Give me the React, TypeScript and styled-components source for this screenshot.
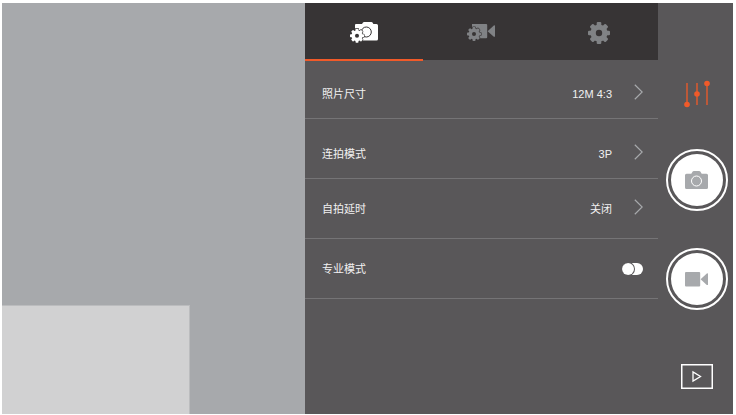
import React, { useState } from "react";
import styled, { createGlobalStyle } from "styled-components";

const colors = {
  panel: "#595759",
  header: "#373435",
  accent: "#f15a29",
  viewfinder: "#a7a9ac",
  preview: "#d1d1d2",
  previewEdge: "#bbbcbe",
  muted: "#808285",
  glyph: "#a7a9ac",
  line: "#757476",
  text: "#f1f1f1",
};

const GlobalStyle = createGlobalStyle`
  *, *::before, *::after { box-sizing: border-box; }
  body {
    margin: 0;
    background: #fff;
    font-family: "Liberation Sans", "Noto Sans CJK SC", sans-serif;
    font-size: 11px;
    line-height: 16px;
    color: ${colors.text};
  }
  button {
    font: inherit;
    color: inherit;
    background: none;
    border: 0;
    padding: 0;
    cursor: pointer;
  }
  svg { display: block; }
`;

const Screen = styled.div`
  min-height: 100vh;
  padding: 3px 3px 1px 2px;
  display: grid;
  grid-template-columns: 303fr 353fr 75px;
`;

const Viewfinder = styled.section`
  background: ${colors.viewfinder};
  display: grid;
  grid-template-columns: 62% 1fr;
  grid-template-rows: 1fr 109px;
`;

const Preview = styled.div`
  grid-area: 2 / 1;
  background: ${colors.preview};
  border: solid ${colors.previewEdge};
  border-width: 1px 1px 0 0;
`;

const Settings = styled.main`
  background: ${colors.panel};
`;

const Tabs = styled.div`
  display: grid;
  grid-template-columns: repeat(3, 1fr);
  height: 57px;
  background: ${colors.header};
`;

const Tab = styled.button<{ $active: boolean }>`
  position: relative;
  display: flex;
  align-items: center;
  justify-content: center;
  padding-top: 2px;
  color: ${(p) => (p.$active ? "#fff" : colors.muted)};

  &::after {
    content: "";
    display: ${(p) => (p.$active ? "block" : "none")};
    position: absolute;
    left: 0;
    right: 0;
    bottom: -1px;
    height: 2px;
    background: ${colors.accent};
  }
`;

const Rows = styled.div`
  display: grid;
  grid-template-rows: 59px 60px 60px 60px;
`;

const Row = styled.label<{ $low?: boolean }>`
  display: flex;
  align-items: center;
  padding: ${(p) => (p.$low ? "10px" : "0")} 15px 0 17px;
  border-bottom: 1px solid ${colors.line};
  text-align: left;
  cursor: pointer;
`;

const RowLabel = styled.span`
  flex: 1;
`;

const RowValue = styled.span`
  margin-right: 22px;
`;

const Arrow = styled.svg`
  width: 9px;
  height: 20px;
  padding-bottom: 4px;
`;

const Toggle = styled.input`
  appearance: none;
  position: relative;
  margin: 0;
  width: 21px;
  height: 12px;
  border-radius: 6px;
  background: #fff;
  overflow: hidden;
  cursor: pointer;

  &::before {
    content: "";
    position: absolute;
    top: 0;
    left: 0;
    width: 12px;
    height: 12px;
    border-radius: 50%;
    background: #fff;
    box-shadow: 0 0 0 1px ${colors.panel};
  }

  &:checked::before {
    left: 9px;
    background: ${colors.accent};
  }
`;

const Rail = styled.aside`
  background: ${colors.panel};
  display: flex;
  flex-direction: column;
  align-items: center;
  justify-content: space-between;
  padding: 76px 0 12px 2px;
`;

const RailButton = styled.button<{ $tall?: boolean }>`
  display: flex;
  align-items: center;
  justify-content: center;
  width: 48px;
  height: ${(p) => (p.$tall ? "52px" : "30px")};
`;

const Shutters = styled.div`
  display: grid;
  gap: 37px;
`;

const Shutter = styled.button`
  display: flex;
  width: 62px;
  height: 62px;
  padding: 3px;
  border: 2px solid #fff;
  border-radius: 50%;
`;

const ShutterFace = styled.span`
  flex: 1;
  display: flex;
  align-items: center;
  justify-content: center;
  border-radius: 50%;
  background: #fff;
`;

type GearProps = { x: number; y: number; r: number; halo?: boolean };

function Gear({ x, y, r, halo }: GearProps) {
  const tooth = r * 0.42;
  const angles = [0, 45, 90, 135];
  const teeth = angles.map((a) => (
    <rect key={a} x={-tooth / 2} y={-r} width={tooth} height={r * 2} rx={r * 0.1} transform={`rotate(${a})`} />
  ));
  return (
    <g transform={`translate(${x} ${y})`}>
      {halo && (
        <g fill={colors.header} stroke={colors.header} strokeWidth="1.2">
          <circle r={r * 0.78} />
          {teeth}
        </g>
      )}
      <g fill="currentColor">
        <circle r={r * 0.78} />
        {teeth}
      </g>
      <circle r={r * 0.29} fill={colors.header} />
    </g>
  );
}

function PhotoSettingsIcon() {
  return (
    <svg width="28" height="21" viewBox="0 0 28 21" aria-hidden="true">
      <path
        d="M6 2h6l1-1.4q.4-.6 1-.6h7.500q.7 0 1 .6l.9 1.400H26.500q1.500 0 1.500 1.500V17q0 1.500-1.500 1.500H5V3q0-1 1-1z"
        fill="currentColor"
      />
      <circle cx="16.300" cy="10" r="5" fill="none" stroke={colors.header} />
      <Gear x={7} y={13.7} r={7} halo />
    </svg>
  );
}

function VideoSettingsIcon() {
  return (
    <svg width="28" height="17" viewBox="0 0 28 17" aria-hidden="true">
      <path d="M5 0h14.200q1 0 1 1v12.200q0 1-1 1H5z" fill="currentColor" />
      <path d="M20.600 7.200l6.200-5.700q1.200-.6 1.200.5v10.200q0 1-1.200.5z" fill="currentColor" />
      <Gear x={7} y={10} r={7} halo />
    </svg>
  );
}

function GeneralIcon() {
  return (
    <svg width="22" height="22" viewBox="0 0 22 22" aria-hidden="true">
      <Gear x={11} y={11} r={11} />
    </svg>
  );
}

function ArrowIcon() {
  return (
    <Arrow viewBox="0 0 9 16" aria-hidden="true">
      <path d="M.8.8L8.200 8 .8 15.200" fill="none" stroke="#a7a9ac" strokeWidth="1.200" />
    </Arrow>
  );
}

function SlidersIcon() {
  return (
    <svg width="26" height="28" viewBox="0 0 26 28" aria-hidden="true">
      <path d="M3 3v22M13 3v22M23 3v22" stroke={colors.accent} strokeWidth="1.300" />
      <g fill={colors.accent}>
        <circle cx="3" cy="24.500" r="2.800" />
        <circle cx="13" cy="14" r="2.800" />
        <circle cx="23" cy="3.500" r="2.800" />
      </g>
    </svg>
  );
}

function CameraIcon() {
  return (
    <svg width="23" height="18" viewBox="0 0 23 18" aria-hidden="true">
      <path
        d="M1.500 2.700h4.800L7.700.6q.4-.6 1.100-.6h5.400q.7 0 1.100.6l1.400 2.100h4.800q1.500 0 1.500 1.500v12.300q0 1.500-1.500 1.500h-20Q0 18 0 16.500V4.200q0-1.500 1.500-1.500z"
        fill={colors.glyph}
      />
      <circle cx="11.500" cy="10" r="5" fill="none" stroke="#fff" />
    </svg>
  );
}

function VideoIcon() {
  return (
    <svg width="23" height="15" viewBox="0 0 23 15" aria-hidden="true">
      <rect width="15.200" height="14.500" rx="1" fill={colors.glyph} />
      <path d="M15.600 7.200l6.200-5.700q1.200-.6 1.200.5v10.400q0 1-1.200.5z" fill={colors.glyph} />
    </svg>
  );
}

function PlaybackIcon() {
  return (
    <svg width="32" height="25" viewBox="0 0 32 25" aria-hidden="true">
      <rect x=".75" y=".75" width="30.500" height="23.500" fill="none" stroke="#fff" strokeWidth="1.500" />
      <path d="M12 8v9l7.500-4.500z" fill="none" stroke="#fff" strokeWidth="1.300" />
    </svg>
  );
}

const tabs = [
  { id: "photo", name: "照片设置", icon: <PhotoSettingsIcon /> },
  { id: "video", name: "视频设置", icon: <VideoSettingsIcon /> },
  { id: "general", name: "通用设置", icon: <GeneralIcon /> },
];

const options = [
  { label: "照片尺寸", value: "12M 4:3", low: true },
  { label: "连拍模式", value: "3P", low: true },
  { label: "自拍延时", value: "关闭", low: false },
];

export default function App() {
  const [active, setActive] = useState("photo");
  const [pro, setPro] = useState(false);

  return (
    <>
      <GlobalStyle />
      <Screen>
        <Viewfinder>
          <Preview />
        </Viewfinder>
        <Settings>
          <Tabs role="tablist">
            {tabs.map((tab) => (
              <Tab
                key={tab.id}
                role="tab"
                aria-label={tab.name}
                aria-selected={tab.id === active}
                $active={tab.id === active}
                onClick={() => setActive(tab.id)}
              >
                {tab.icon}
              </Tab>
            ))}
          </Tabs>
          <Rows>
            {options.map((option) => (
              <Row as="button" key={option.label} $low={option.low}>
                <RowLabel>{option.label}</RowLabel>
                <RowValue>{option.value}</RowValue>
                <ArrowIcon />
              </Row>
            ))}
            <Row htmlFor="pro-mode">
              <RowLabel>专业模式</RowLabel>
              <Toggle
                id="pro-mode"
                type="checkbox"
                checked={pro}
                onChange={(event) => setPro(event.target.checked)}
              />
            </Row>
          </Rows>
        </Settings>
        <Rail>
          <RailButton aria-label="设置">
            <SlidersIcon />
          </RailButton>
          <Shutters>
            <Shutter aria-label="拍照">
              <ShutterFace>
                <CameraIcon />
              </ShutterFace>
            </Shutter>
            <Shutter aria-label="录像">
              <ShutterFace>
                <VideoIcon />
              </ShutterFace>
            </Shutter>
          </Shutters>
          <RailButton $tall aria-label="回放">
            <PlaybackIcon />
          </RailButton>
        </Rail>
      </Screen>
    </>
  );
}
